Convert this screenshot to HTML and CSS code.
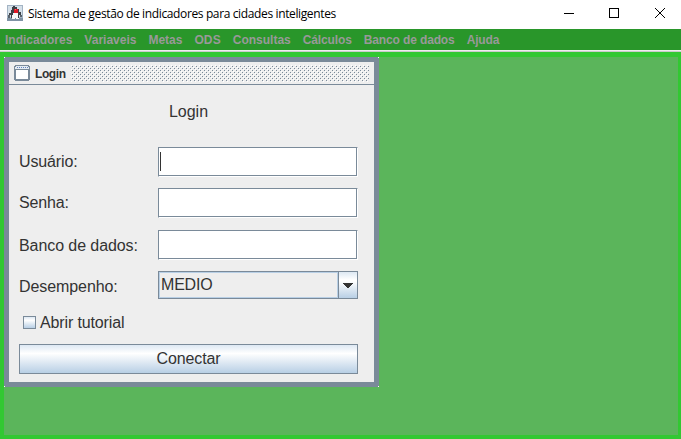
FILE: index.html
```
<!DOCTYPE html>
<html lang="pt-BR">
<head>
<meta charset="utf-8">
<title>Sistema de gestão de indicadores para cidades inteligentes</title>
<link rel="stylesheet" href="styles.css">
</head>
<body>
<div class="window">
  <header class="titlebar">
    <svg class="app-icon" width="16" height="16" viewBox="0 0 16 16" shape-rendering="crispEdges">
      <rect width="16" height="16" fill="#a3b4c4"/>
      <rect x="1" y="1" width="14" height="11" fill="#d5e0e9"/>
      <rect y="13" width="16" height="3" fill="#8093a5"/>
      <path d="M6 1h2v1h2v2h2v3h2v3h1v2h-2v-2h-1v3H4v-3H3v2H1v-2h1V8h2V5h1V2h1z" fill="#3c4147"/>
      <path d="M6 8h5v5h1v1H9v-1H8v1H5v-4h1z" fill="#f7f8f8"/>
      <path d="M1 10h2v3H1zM13 10h2v2h-2z" fill="#59636d"/>
      <rect x="7" y="4" width="4" height="4" fill="#e01826"/>
      <rect x="8" y="4" width="1" height="1" fill="#ff6870"/>
    </svg>
    <span class="window-title">Sistema de gestão de indicadores para cidades inteligentes</span>
    <svg class="controls" width="138" height="29" viewBox="0 0 138 29" fill="none" stroke="#000" shape-rendering="crispEdges">
      <path d="M21 13.5h10"/>
      <rect x="66.5" y="8.5" width="9" height="9"/>
      <path d="M112 8l10 10M122 8l-10 10" shape-rendering="auto"/>
    </svg>
  </header>
  <nav class="menubar">
    <span>Indicadores</span><span>Variaveis</span><span>Metas</span><span class="loose">ODS</span><span>Consultas</span><span class="tight">Cálculos</span><span class="tight">Banco de dados</span><span class="tight">Ajuda</span>
  </nav>
  <main class="desktop">
    <section class="frame">
      <div class="frame-title">
        <svg width="16" height="16" viewBox="0 0 16 16" shape-rendering="crispEdges">
          <path d="M1 0h14v1h1v14h-1v1H1v-1H0V1h1z" fill="#7a8a99"/>
          <path d="M2 1h12v1h1v2H1V2h1z" fill="#e4ebf1"/>
          <path d="M3 2h1v1H3zM5 2h1v1H5zM7 2h1v1H7zM9 2h1v1H9zM11 2h1v1h-1zM13 2h1v1h-1z" fill="#6382bf"/>
          <rect x="2" y="5" width="12" height="9" fill="#fff"/>
        </svg>
        <b>Login</b>
        <svg class="bumps" width="298" height="17">
          <defs><pattern id="bump" width="4" height="4" patternUnits="userSpaceOnUse">
            <path d="M0 0h1v1H0zM2 2h1v1H2z" fill="#fff"/>
            <path d="M1 1h1v1H1zM3 3h1v1H3z" fill="#7a8a99"/>
          </pattern></defs>
          <rect width="298" height="17" fill="url(#bump)"/>
        </svg>
      </div>
      <form class="form">
        <h1>Login</h1>
        <div class="fields">
          <label for="user">Usuário:</label><div class="field focused"><input id="user" type="text"></div>
          <label for="pass">Senha:</label><div class="field"><input id="pass" type="password"></div>
          <label class="low" for="db">Banco de dados:</label><div class="field"><input id="db" type="text"></div>
          <label class="low">Desempenho:</label>
          <div class="combo"><span>MEDIO</span><i><svg width="10" height="5" shape-rendering="crispEdges"><path d="M0 0h10v1H9v1H8v1H7v1H6v1H4V4H3V3H2V2H1V1H0z" fill="#333"/></svg></i></div>
        </div>
        <div class="check"><i></i><span>Abrir tutorial</span></div>
        <button type="button">Conectar</button>
      </form>
    </section>
  </main>
</div>
</body>
</html>
```
FILE: styles.css
```
* { box-sizing: border-box; }
body { margin: 0; overflow: hidden; font: 16px/18px "Liberation Sans", Arial, sans-serif; color: #333; }
.window { width: 681px; height: 439px; display: flex; flex-direction: column; background: #fff; }
.titlebar { height: 29px; flex: none; display: flex; padding-left: 7px; background: #fff; color: #000; }
.app-icon { margin-top: 5px; }
.window-title { margin: 5px 0 0 5px; font: 12px/18px "Open Sans", "Noto Sans", sans-serif; letter-spacing: -0.37px; white-space: nowrap; }
.controls { margin-left: auto; }
.menubar { height: 23px; flex: none; display: flex; gap: 12px; padding: 2px 5px 0; background: #29962a; border-bottom: 1px solid #ccc; box-shadow: inset 0 -1px #eee; font-weight: bold; font-size: 12px; color: #999; white-space: nowrap; }
.loose { letter-spacing: 0.1px; }
.tight { letter-spacing: -0.13px; }
.desktop { flex: 1; background: #5bb55b; border: solid #32c832; border-width: 5px 3px 4px 4px; }
.frame {
  --dot: linear-gradient(#fff, #fff);
  width: 375px; height: 330px; border: 5px solid transparent;
  background:
    var(--dot) 0 0 / 1px 1px no-repeat border-box,
    var(--dot) 100% 0 / 1px 1px no-repeat border-box,
    var(--dot) 0 100% / 1px 1px no-repeat border-box,
    var(--dot) 100% 100% / 1px 1px no-repeat border-box,
    linear-gradient(#eee, #eee) padding-box,
    linear-gradient(#7a8a99, #7a8a99) border-box;
}
.frame-title { height: 23px; display: flex; padding-left: 5px; border-bottom: 1px solid #7a8a99; }
.frame-title > svg { flex: none; margin-top: 3px; }
.frame-title b { width: 36px; margin: 3px 0 0 5px; font-size: 12px; letter-spacing: -0.4px; }
.form { padding: 17px 16px 0 10px; }
h1 { margin: 0; font-size: 16px; line-height: 20px; font-weight: normal; text-align: center; }
.fields { display: grid; grid-template-columns: 139px 200px; grid-template-rows: 41px 42px 41px 28px; margin-top: 25px; align-items: start; }
.fields label { padding-top: 6px; white-space: nowrap; letter-spacing: -0.13px; }
.fields .low { padding-top: 7px; letter-spacing: -0.08px; }
.field { height: 30px; border: 1px solid #7a8a99; border-right-color: #fff; border-bottom-color: #fff; background: #fff; }
.field input { display: block; width: 198px; height: 28px; margin: 0; padding: 0 2px; border: solid #7a8a99; border-width: 0 1px 1px 0; outline: 0; background: #fff; font: inherit; }
.focused { position: relative; }
.focused::after { content: ""; position: absolute; left: 1px; top: 4px; width: 1px; height: 19px; background: #333; }
.combo { height: 28px; display: flex; border: 1px solid #7a8a99; }
.combo span { flex: 1; border: 1px solid #b8cfe5; padding: 3px 1px; letter-spacing: -0.2px; }
.combo i { width: 19px; border-left: 1px solid #7a8a99; display: grid; place-items: center; background: linear-gradient(#dde8f3, #fff 30%, #fff 35%, #b8cfe5); }
.check { display: flex; gap: 4px; margin: 15px 0 0 4px; letter-spacing: -0.13px; }
.check i { width: 13px; height: 13px; margin-top: 2px; border: 1px solid #7a8a99; background: linear-gradient(#dde8f3, #fff 30%, #b8cfe5); }
button { display: block; width: 339px; height: 30px; margin: 12px 0 0; padding: 0; border: 1px solid #7a8a99; border-radius: 0; background: linear-gradient(#dde8f3, #fff 30%, #b8cfe5); font: inherit; color: inherit; letter-spacing: -0.1px; }
```
